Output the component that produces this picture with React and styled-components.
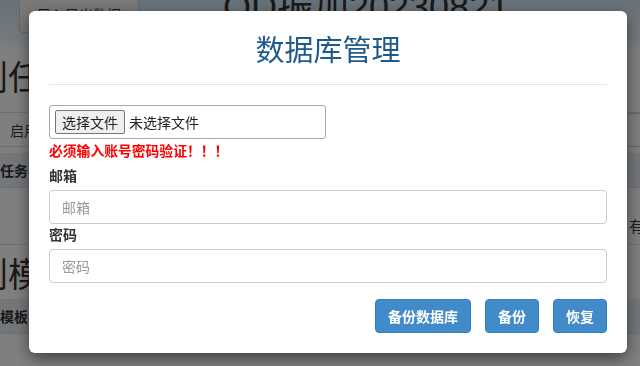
import React from "react";
import styled, { createGlobalStyle } from "styled-components";

const GlobalStyle = createGlobalStyle`
  html, body {
    margin: 0;
    padding: 0;
    background: #fff;
    overflow: hidden;
  }
  body {
    font-family: "Liberation Sans", "Noto Sans CJK SC", sans-serif;
    font-size: 14px;
    color: #333;
  }
`;

// background page (behind the backdrop)

const Page = styled.div`
  width: 640px;
  height: 366px;
  overflow: hidden;
`;

const TopBar = styled.div`
  height: 52px;
  display: flex;
  align-items: flex-start;
  background: linear-gradient(#cfe4f4, #e9f1f7 70%, #fff);
`;

const BackBtn = styled.div`
  margin: -6px 0 0 19px;
  width: 118px;
  height: 37px;
  border: 1px solid #ccc;
  border-radius: 4px;
  background: #f2f2f2;
  display: flex;
  align-items: center;
  justify-content: center;
  font-size: 14px;
  color: #333;
`;

const PageTitle = styled.div`
  margin: -12px 0 0 84px;
  font-size: 36px;
  line-height: 40px;
  color: #333;
`;

const Heading = styled.div`
  margin: ${(p) => p.$top}px 0 0 -60px;
  font-size: 34px;
  line-height: 36px;
  color: #333;
`;

const ToolRow = styled.div`
  margin-top: 16px;
  height: 33px;
  border-top: 1px solid #ddd;
  border-bottom: 1px solid #ddd;
  display: flex;
  align-items: center;
  justify-content: space-between;
  padding-left: 10px;
`;

const ToolInput = styled.div`
  width: 40px;
  height: 32px;
  margin-right: -26px;
  border: 1px solid #ccc;
  border-radius: 4px;
`;

const HeadRow = styled.div`
  margin-top: 6px;
  height: 34px;
  background: #e9eff5;
  border-bottom: 1px solid #ddd;
  display: flex;
  align-items: center;
  font-weight: bold;
  font-size: 14px;
  padding-left: ${(p) => p.$pad}px;
`;

const BodyRow = styled.div`
  height: 57px;
  border-bottom: 1px solid #ddd;
  display: flex;
  align-items: flex-end;
  justify-content: flex-end;
  padding-bottom: 8px;
  box-sizing: border-box;
  font-size: 15px;
  margin-right: -4px;
`;

// modal

const Backdrop = styled.div`
  position: fixed;
  inset: 0;
  background: rgba(0, 0, 0, 0.5);
`;

const Dialog = styled.div`
  position: fixed;
  top: 11px;
  left: 29px;
  width: 598px;
  background: #fff;
  border-radius: 6px;
  box-shadow: 0 5px 15px rgba(0, 0, 0, 0.5);
`;

const Header = styled.div`
  margin: 0 20px;
  padding: 15px 0 14px;
  border-bottom: 1px solid #e5e5e5;
  text-align: center;
`;

const Title = styled.h4`
  margin: 0;
  font-family: "Noto Sans CJK SC", sans-serif;
  font-weight: normal;
  font-size: 29px;
  line-height: 44px;
  color: #1f5a8c;
`;

const Body = styled.div`
  padding: 20px 20px 20px;
`;

const FileBox = styled.div`
  width: 277px;
  height: 34px;
  box-sizing: border-box;
  border: 1px solid #aaa;
  border-radius: 3px;
  display: flex;
  align-items: center;
  gap: 4px;
  padding-left: 5px;
  font-family: "Noto Sans CJK SC", sans-serif;
  font-size: 14px;
`;

const FileBtn = styled.span`
  height: 22px;
  padding: 0 6px;
  border: 1px solid #767676;
  border-radius: 2px;
  background: #efefef;
  display: flex;
  align-items: center;
  color: #222;
  font-size: 14px;
`;

const FileName = styled.span`
  color: #222;
`;

const Warning = styled.div`
  margin-top: 1px;
  font-family: "Noto Sans CJK SC", sans-serif;
  font-weight: bold;
  font-size: 13.8px;
  line-height: 20px;
  color: #f00;
`;

const Label = styled.label`
  display: block;
  margin: ${(p) => p.$top}px 0 5px;
  font-family: "Noto Sans CJK SC", sans-serif;
  font-weight: bold;
  font-size: 14px;
  line-height: 20px;
  color: #333;
`;

const Input = styled.input`
  display: block;
  width: 100%;
  height: 34px;
  box-sizing: border-box;
  padding: 6px 12px;
  border: 1px solid #ccc;
  border-radius: 4px;
  font-family: "Noto Sans CJK SC", sans-serif;
  font-size: 14px;
  outline: none;
  &::placeholder {
    color: #999;
  }
`;

const Actions = styled.div`
  margin-top: 16px;
  display: flex;
  justify-content: flex-end;
  gap: 14px;
`;

const Button = styled.button`
  height: 34px;
  padding: 0 12px;
  border: 1px solid #357ebd;
  border-radius: 4px;
  background: #428bca;
  color: #fff;
  font-family: "Noto Sans CJK SC", sans-serif;
  font-weight: bold;
  font-size: 14px;
  min-width: ${(p) => p.$w}px;
`;

export default function App() {
  return (
    <>
      <GlobalStyle />
      <Page>
        <TopBar>
          <BackBtn>导入导出数据</BackBtn>
          <PageTitle>QD振加20230821</PageTitle>
        </TopBar>
        <Heading $top={8}>计划任务</Heading>
        <ToolRow>
          <span>启用</span>
          <ToolInput />
        </ToolRow>
        <HeadRow $pad={0}>任务名</HeadRow>
        <BodyRow>有</BodyRow>
        <Heading $top={12}>计划模板</Heading>
        <HeadRow $pad={0}>模板名</HeadRow>
      </Page>

      <Backdrop />
      <Dialog>
        <Header>
          <Title>数据库管理</Title>
        </Header>
        <Body>
          <FileBox>
            <FileBtn>选择文件</FileBtn>
            <FileName>未选择文件</FileName>
          </FileBox>
          <Warning>必须输入账号密码验证！！！</Warning>
          <Label $top={5}>邮箱</Label>
          <Input placeholder="邮箱" />
          <Label $top={0}>密码</Label>
          <Input placeholder="密码" type="password" />
          <Actions>
            <Button $w={96}>备份数据库</Button>
            <Button $w={54}>备份</Button>
            <Button $w={54}>恢复</Button>
          </Actions>
        </Body>
      </Dialog>
    </>
  );
}
